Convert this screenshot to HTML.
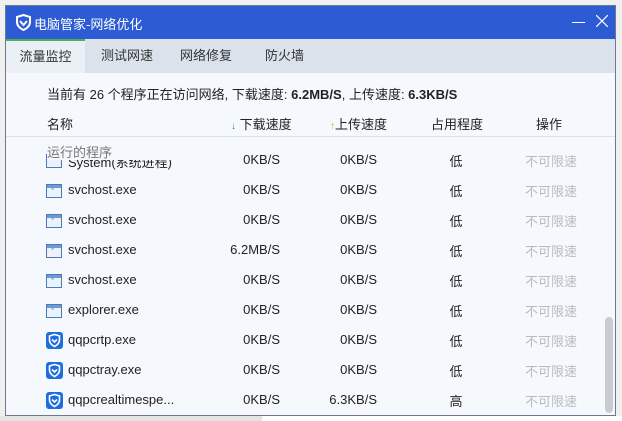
<!DOCTYPE html>
<html><head><meta charset="utf-8"><style>
*{margin:0;padding:0;box-sizing:border-box}
body{width:622px;height:421px;background:#f0f0f0;position:relative;overflow:hidden;font-family:"Liberation Sans","Noto Sans CJK SC",sans-serif;font-size:13px;color:#222}
.win{position:absolute;left:5px;top:5px;width:611px;height:411px;border:1px solid #6b7890;background:#f5f8fc;overflow:hidden}
.title{position:absolute;left:0;top:0;width:100%;height:33px;background:#2d5bd3;color:#fff;font-size:13px}
.title .t{position:absolute;left:28px;top:8px}
.tabs{position:absolute;left:0;top:33px;width:100%;height:34px;background:#dae2ec}
.tab{position:absolute;top:0;height:34px;line-height:34px;font-size:13px;color:#333}
.tab.a{left:0;width:79px;background:#eaf0f6;border-top:2px solid #4cb05a;line-height:31px;text-align:center}
.abs{position:absolute;white-space:nowrap}
.r{text-align:right}
.c{text-align:center}
.gray{color:#b8bcc2}
.ic{position:absolute;left:40px;width:16px;height:14px;border:1px solid #4e79b8;background:#eaf2fb}
.ic:before{content:"";position:absolute;left:0;top:0;width:14px;height:3px;background:#6e9ad2}
.ic:after{content:"*";position:absolute;left:4px;top:1px;font-size:8px;color:#6e9ad2}
.qq{position:absolute;left:40px;width:17px;height:17px;background:#1e6de0;border-radius:3px}
</style></head><body>
<div style="position:absolute;left:0;top:416px;width:262px;height:5px;background:#e4e4e4"></div>
<div style="position:absolute;left:262px;top:416px;width:360px;height:5px;background:#fff"></div>
<div class="win">
<div class="title">
<svg style="position:absolute;left:9px;top:8px" width="17" height="17" viewBox="0 0 17 17"><path d="M2 3 L8.5 1 L15 3 L15 8 Q15 13 8.5 16 Q2 13 2 8 Z" fill="none" stroke="#fff" stroke-width="2"/><path d="M5 7 L8.5 11 L12 7" fill="none" stroke="#fff" stroke-width="2"/></svg>
<span class="t">电脑管家-网络优化</span>
<div class="abs" style="left:566px;top:16px;width:13px;height:1px;background:#fff"></div>
<svg style="position:absolute;left:590px;top:9px" width="12" height="12"><path d="M0 0L12 12M12 0L0 12" stroke="#fff" stroke-width="1.2"/></svg>
</div>
<div class="tabs">
<div class="tab a">流量监控</div>
<div class="tab" style="left:95px">测试网速</div>
<div class="tab" style="left:174px">网络修复</div>
<div class="tab" style="left:259px">防火墙</div>
</div>
<div class="abs" style="left:41px;top:78px;font-size:13px">当前有 26 个程序正在访问网络, 下载速度: <b>6.2MB/S</b>, 上传速度: <b>6.3KB/S</b></div>
<div class="abs" style="left:41px;top:108px">名称</div>
<div class="abs" style="left:225px;top:108px"><span style="color:#3a9a3a;font-size:10px">↓</span> 下载速度</div>
<div class="abs" style="left:324px;top:108px"><span style="color:#e8a030;font-size:10px">↑</span>上传速度</div>
<div class="abs" style="left:425px;top:108px">占用程度</div>
<div class="abs" style="left:530px;top:108px">操作</div>
<div class="abs" style="left:0;top:130px;width:611px;height:1px;background:#dde2e8"></div>
<div style="position:absolute;left:0;top:143px;width:611px;height:268px;overflow:hidden">
<div id="rows"></div>
</div>
<div class="abs" style="left:41px;top:139px;color:#777;background:#f5f8fc;width:140px;height:15px;line-height:15px">运行的程序</div>
<div class="abs" style="left:599px;top:311px;width:8px;height:96px;background:#c8cbcf;border-radius:4px"></div>
</div>
<script>
var d=[["System(系统进程)","0KB/S","0KB/S","低",0],["svchost.exe","0KB/S","0KB/S","低",0],["svchost.exe","0KB/S","0KB/S","低",0],["svchost.exe","6.2MB/S","0KB/S","低",0],["svchost.exe","0KB/S","0KB/S","低",0],["explorer.exe","0KB/S","0KB/S","低",0],["qqpcrtp.exe","0KB/S","0KB/S","低",1],["qqpctray.exe","0KB/S","0KB/S","低",1],["qqpcrealtimespe...","0KB/S","6.3KB/S","高",1]];
var h="";d.forEach(function(r,i){var y=i*30-3;var c=y+15;
h+=r[4]?'<div class="qq" style="top:'+(c-9)+'px"><svg width="17" height="17" viewBox="0 0 17 17"><path d="M3.5 4 L8.5 2.5 L13.5 4 L13.5 8 Q13.5 12 8.5 14.5 Q3.5 12 3.5 8 Z" fill="none" stroke="#fff" stroke-width="1.6"/><path d="M6 7.5 L8.5 10 L11 7.5" fill="none" stroke="#fff" stroke-width="1.6"/></svg></div>':'<div class="ic" style="top:'+(c-7)+'px"></div>';
h+='<div class="abs" style="left:62px;top:'+(c-9)+'px">'+r[0]+'</div>';
h+='<div class="abs r" style="left:170px;width:104px;top:'+(c-9)+'px">'+r[1]+'</div>';
h+='<div class="abs r" style="left:270px;width:101px;top:'+(c-9)+'px">'+r[2]+'</div>';
h+='<div class="abs c" style="left:430px;width:40px;top:'+(c-10)+'px">'+r[3]+'</div>';
h+='<div class="abs gray" style="left:519px;top:'+(c-10)+'px">不可限速</div>';});
document.getElementById("rows").innerHTML=h;
</script>
</body></html>
